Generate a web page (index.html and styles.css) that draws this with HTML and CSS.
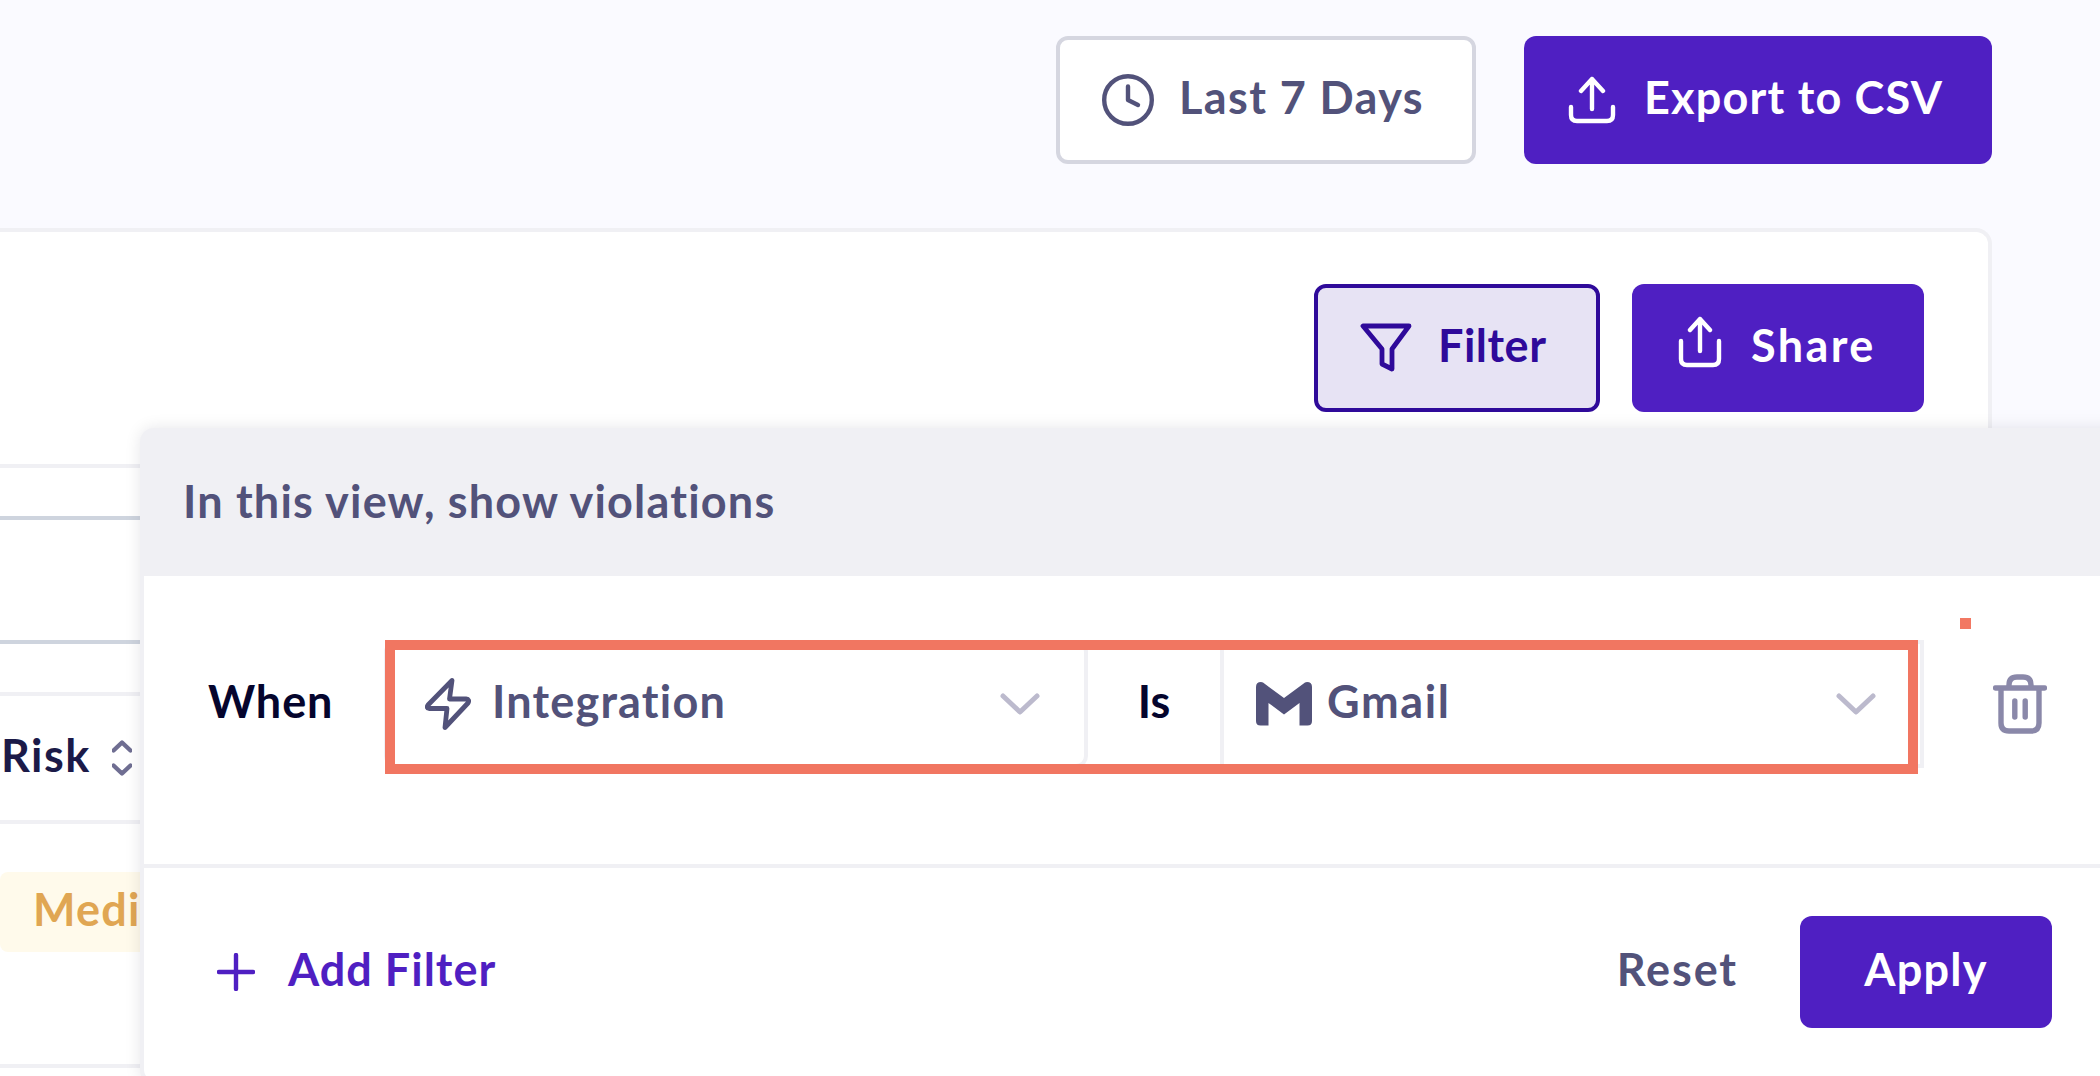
FILE: index.html
```html
<!DOCTYPE html>
<html lang="en">
<head>
<meta charset="utf-8">
<title>Violations</title>
<link rel="stylesheet" href="styles.css">
</head>
<body>
<div class="page">
  <header class="toolbar">
    <button class="btn btn-outline">
      <svg class="icon" width="52" height="52" viewBox="0 0 52 52"><circle cx="26" cy="26" r="23.8"/><path d="M26 12.500V26L36 31"/></svg>
      <span class="label t-days">Last 7 Days</span>
    </button>
    <button class="btn btn-primary btn-export">
      <svg class="icon" width="48" height="48" viewBox="0 0 48 48"><path d="M24 33V3M13 15L24 3L35 15M3 31V39Q3 45 9 45H39Q45 45 45 39V31"/></svg>
      <span class="label t-export">Export to CSV</span>
    </button>
  </header>

  <main class="card">
    <div class="actions">
      <button class="btn btn-active">
        <svg class="icon icon-bold" width="52" height="50" viewBox="0 0 52 50"><path d="M3 3H49L32 26V46L22 41V26Z"/></svg>
        <span class="label t-filter">Filter</span>
      </button>
      <button class="btn btn-primary btn-share">
        <svg class="icon icon-share" width="44" height="52" viewBox="0 0 44 52"><path d="M22 35V3M12 14L22 3L32 14M3 25V43Q3 49 9 49H35Q41 49 41 43V25"/></svg>
        <span class="label t-share">Share</span>
      </button>
    </div>
    <div class="table">
      <div class="search"></div>
      <div class="table-head">
        <span class="label t-risk">Risk</span>
        <svg class="sort" width="20" height="36" viewBox="0 0 20 36"><path d="M1.500 10.500L10 2.500L18.500 10.500M1.500 25.500L10 33.500L18.500 25.500"/></svg>
      </div>
      <div class="table-row"><span class="badge"><span class="label t-medium">Medium</span></span></div>
      <div class="table-row"></div>
    </div>
  </main>

  <section class="popover">
    <div class="popover-head"><span class="label t-head">In this view, show violations</span></div>
    <div class="rule">
      <span class="label t-when">When</span>
      <div class="condition">
        <div class="select select-field">
          <svg class="icon icon-bold bolt" width="46" height="52" viewBox="0 0 46 52"><path d="M27 2.500L3 27Q1 30 4 30.500H22L20 49.500L43 25Q45 21.500 41 21H24.500Z"/></svg>
          <span class="label t-integration">Integration</span>
          <svg class="chevron" width="40" height="22" viewBox="0 0 40 22"><path d="M3 3L20 19L37 3"/></svg>
        </div>
        <div class="operator"><span class="label t-is">Is</span></div>
        <div class="select select-value">
          <svg class="gmail" width="56" height="44" viewBox="0 0 56 44"><path d="M0 5Q0 0 5 0Q7 0 9 2L28 16L47 2Q49 0 51 0Q56 0 56 5V39Q56 43.500 51.500 43.500H43.500V21L28 32.500L12.500 21V43.500H4.500Q0 43.500 0 39Z"/></svg>
          <span class="label t-gmail">Gmail</span>
          <svg class="chevron" width="40" height="22" viewBox="0 0 40 22"><path d="M3 3L20 19L37 3"/></svg>
        </div>
        <div class="highlight"></div>
        <div class="highlight-dot"></div>
      </div>
      <svg class="trash" width="54" height="60" viewBox="0 0 54 60"><path d="M2.500 14H51.500M16 14V11Q16 3 24 3H30Q38 3 38 11V14M8 14V49Q8 57 16 57H38Q46 57 46 49V14"/><path d="M21.800 27V43M32.200 27V43"/></svg>
    </div>
    <div class="popover-foot">
      <svg class="icon plus" width="38" height="38" viewBox="0 0 38 38"><path d="M19 2V36M2 19H36"/></svg>
      <span class="label t-add">Add Filter</span>
      <span class="label t-reset">Reset</span>
      <button class="btn btn-primary btn-apply"><span class="label t-apply">Apply</span></button>
    </div>
  </section>
</div>
</body>
</html>
```
FILE: styles.css
```css
* { box-sizing: border-box; }

body {
  margin: 0;
  font-family: Lato, "Liberation Sans", sans-serif;
  font-size: 45px;
  font-weight: 700;
  line-height: 52px;
  letter-spacing: 1px;
  font-variant-ligatures: none;
  color: #52527a;
}

.page {
  position: relative;
  width: 2100px;
  height: 1076px;
  overflow: hidden;
  background: #fafaff;
}

.label { white-space: nowrap; margin-top: -6px; }

.icon, .chevron, .sort, .trash {
  flex: none;
  fill: none;
  stroke: currentColor;
  stroke-width: 4.4;
  stroke-linecap: round;
  stroke-linejoin: round;
}
.icon-bold { stroke-width: 4.8; }
.chevron { color: #bcbacd; stroke-width: 5; margin-left: auto; }

.btn {
  display: flex;
  align-items: center;
  height: 128px;
  padding: 0;
  border: 0;
  border-radius: 12px;
  font: inherit;
  letter-spacing: inherit;
  color: inherit;
}
.btn-primary { background: #4f1fc2; color: #fff; }
.btn-outline { width: 420px; padding-left: 42px; border: 4px solid #d5d6e0; background: #fff; }
.btn-export { width: 468px; padding-left: 44px; }
.btn-active { width: 286px; padding-left: 42px; border: 4px solid #2f0a9a; background: #e7e3f4; color: #2f0a9a; }
.btn-share { width: 292px; padding-left: 46px; }
.btn-apply { width: 252px; height: 112px; justify-content: center; margin-left: 62px; }
.icon-share { margin-top: -12px; }

.toolbar {
  display: flex;
  justify-content: flex-end;
  gap: 48px;
  height: 228px;
  padding: 36px 108px 0 0;
}

.card {
  width: 1992px;
  height: 860px;
  border-top: 4px solid #f0f0f4;
  border-right: 4px solid #f0f0f4;
  border-top-right-radius: 16px;
  background: #fff;
}
.actions {
  display: flex;
  justify-content: flex-end;
  gap: 32px;
  padding: 52px 64px 52px 0;
}

.table { border-top: 4px solid #f0f0f4; padding-top: 48px; }
.search {
  height: 128px;
  margin-bottom: 48px;
  border-top: 4px solid #ced4de;
  border-bottom: 4px solid #ced4de;
}
.table-head {
  display: flex;
  align-items: center;
  height: 128px;
  padding-left: 1px;
  border-top: 4px solid #f0f0f4;
  color: #1b1a48;
}
.sort { color: #6f6e92; }
.table-row { height: 244px; padding-top: 48px; border-top: 4px solid #f0f0f4; }
.badge {
  display: flex;
  align-items: center;
  width: 240px;
  height: 80px;
  padding-left: 33px;
  border-radius: 8px;
  background: #fffaeb;
  color: #e0a653;
}

.popover {
  position: absolute;
  left: 140px;
  top: 428px;
  width: 2000px;
  height: 656px;
  border: 4px solid #f0f0f4;
  border-radius: 14px;
  background: #fff;
  box-shadow: 0 0 16px rgba(20, 20, 40, 0.1);
}
.popover-head {
  display: flex;
  align-items: center;
  height: 144px;
  padding-left: 39px;
  background: #f0f0f4;
}
.rule {
  display: flex;
  align-items: center;
  height: 288px;
  padding: 0 0 32px 64px;
}
.t-when, .t-is { color: #05052d; }
.condition {
  position: relative;
  display: flex;
  width: 1540px;
  height: 128px;
}
.select { display: flex; align-items: center; border: 4px solid #f0f0f4; }
.select-field { width: 704px; padding: 0 44px 0 37px; border-radius: 12px; }
.operator {
  display: flex;
  justify-content: center;
  align-items: center;
  width: 132px;
  border-top: 4px solid #f0f0f4;
  border-bottom: 4px solid #f0f0f4;
}
.select-value { width: 704px; padding: 0 44px 0 32px; }
.gmail { flex: none; fill: #52527a; }
.highlight {
  position: absolute;
  left: 1px;
  top: 0;
  width: 1533px;
  height: 134px;
  border: 10px solid #f0705b;
  opacity: 0.96;
}
.highlight-dot {
  position: absolute;
  left: 1576px;
  top: -22px;
  width: 11px;
  height: 11px;
  background: #f27863;
}
.trash { margin-left: 69px; color: #8a88a9; stroke-width: 5.4; }

.popover-foot {
  display: flex;
  align-items: center;
  height: 212px;
  padding: 0 84px 0 73px;
  border-top: 4px solid #f0f0f4;
}
.plus, .t-add { color: #4f1fc2; }

.t-days { margin-left: 25px; letter-spacing: 1.4px; }
.t-export { margin-left: 28px; letter-spacing: 1.2px; }
.t-filter { margin-left: 26px; letter-spacing: 0.5px; }
.t-share { margin-left: 29px; letter-spacing: 2.4px; }
.t-head { letter-spacing: 1.2px; }
.t-when { width: 176px; letter-spacing: 0.9px; }
.t-is { letter-spacing: 0; }
.t-risk { width: 111px; letter-spacing: 1.5px; }
.t-medium { letter-spacing: 1.2px; }
.t-integration { margin-left: 21px; letter-spacing: 1.2px; }
.t-gmail { margin-left: 15px; letter-spacing: 1.6px; }
.t-add { margin-left: 33px; }
.t-reset { margin-left: auto; letter-spacing: 1.9px; }
.t-apply { letter-spacing: 1.3px; }
```
